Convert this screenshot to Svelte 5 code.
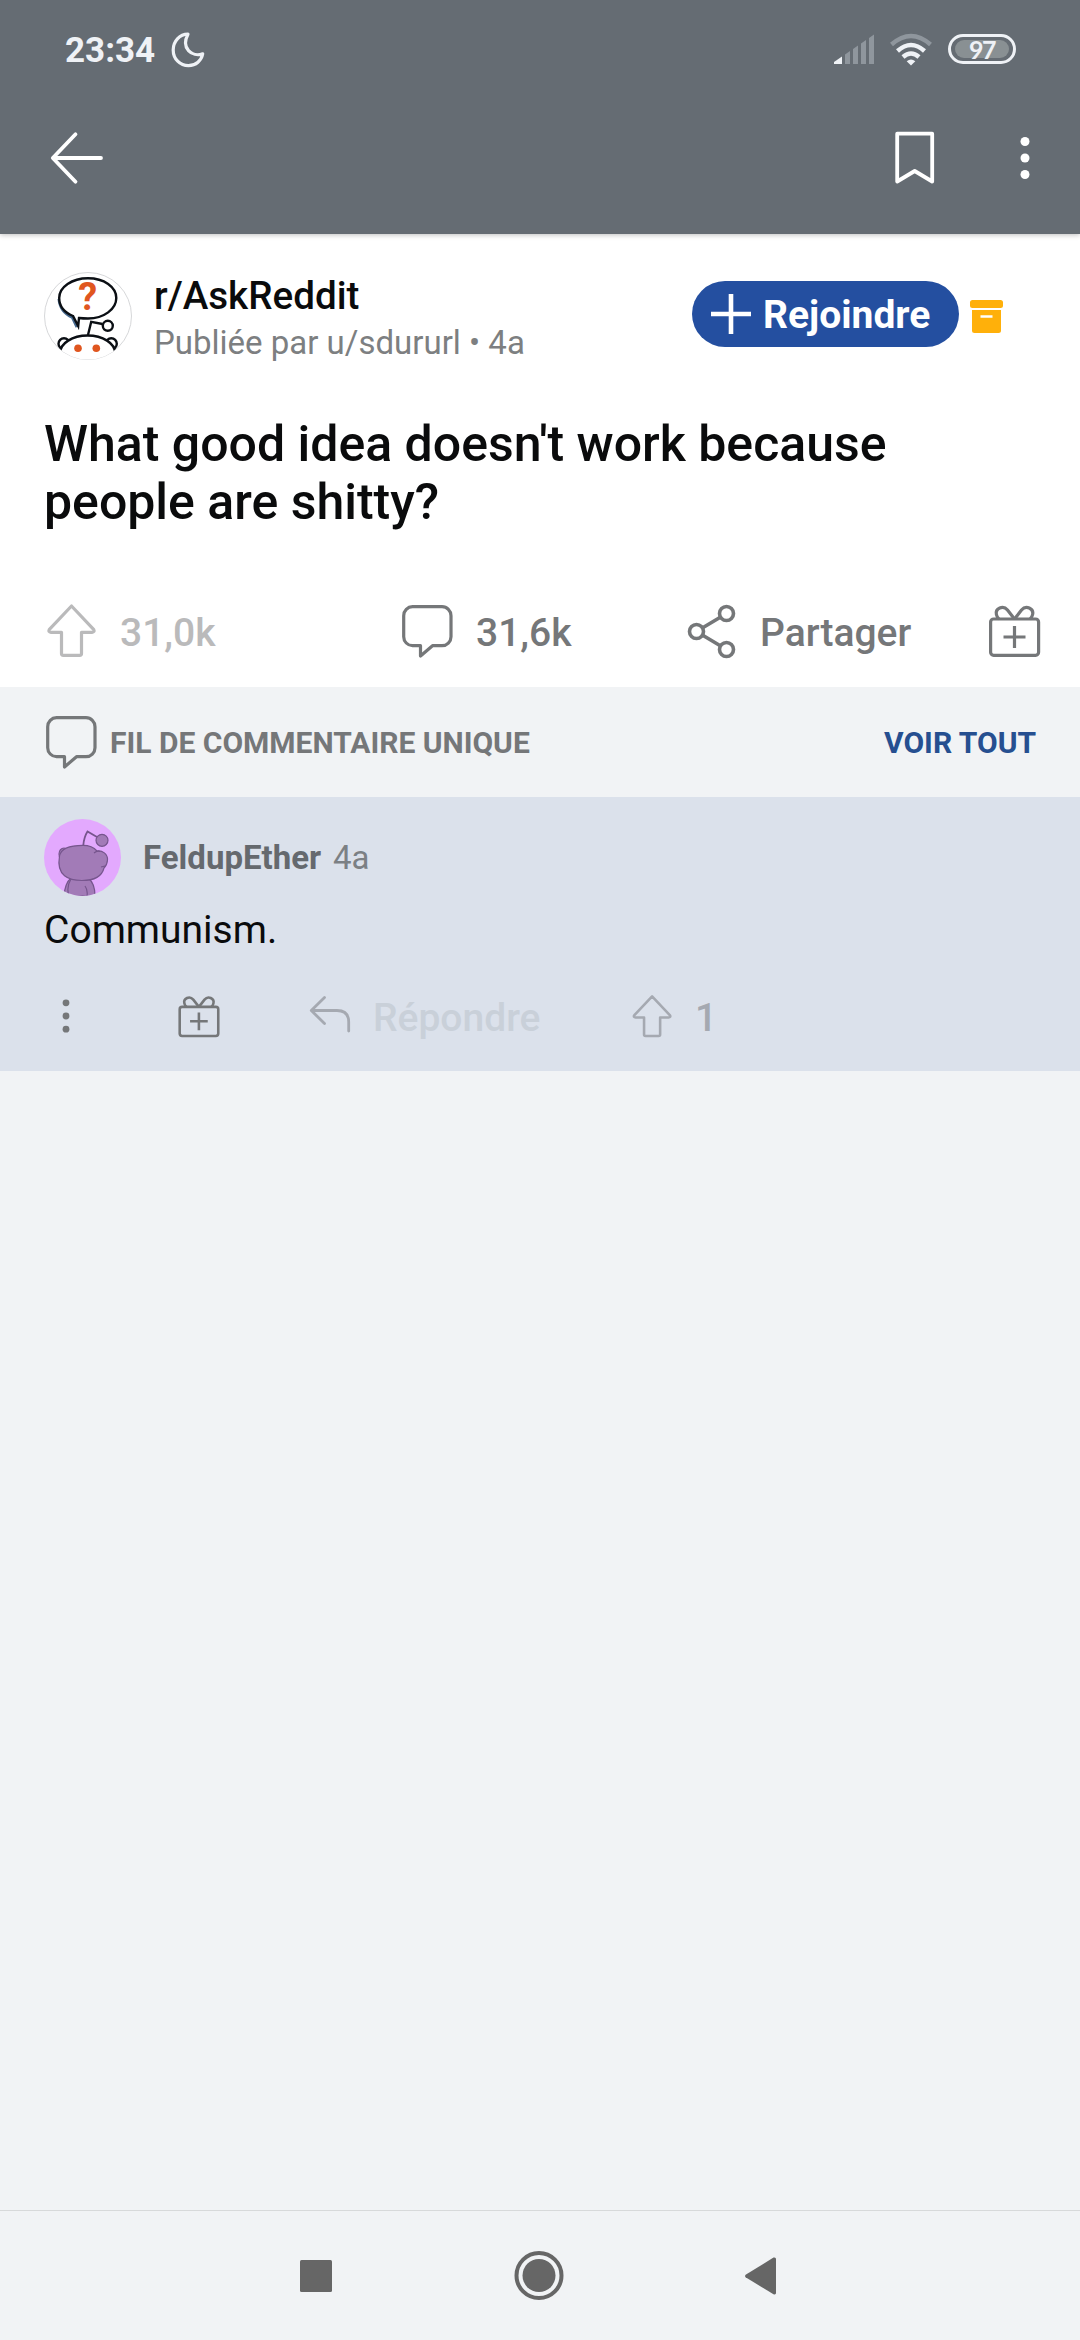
<script>
  let time = '23:34';
  let battery = 97;

  const post = {
    subreddit: 'r/AskReddit',
    byline: 'Publiée par u/sdururl • 4a',
    title: "What good idea doesn't work because people are shitty?",
    score: '31,0k',
    comments: '31,6k'
  };

  const comment = {
    author: 'FeldupEther',
    age: '4a',
    body: 'Communism.',
    score: 1
  };
</script>

{#snippet upvote()}
  <svg class="icon" viewBox="0 0 56 56">
    <path d="M27.5 3 L49.8 26.6 Q51 29 48 29.3 H37.5 V50.5 Q37.5 52.3 35.7 52.3 H19.3 Q17.5 52.3 17.5 50.5 V29.3 H7 Q4 29 5.2 26.6 Z" />
  </svg>
{/snippet}

{#snippet bubble()}
  <svg class="icon" viewBox="0 0 56 56">
    <path d="M12.5 3.7 H42 A9 9 0 0 1 51 12.7 V33.7 A9 9 0 0 1 42 42.7 H32.5 L20.5 53 V42.7 H12.5 A9 9 0 0 1 3.7 33.7 V12.7 A9 9 0 0 1 12.5 3.7 Z" />
  </svg>
{/snippet}

{#snippet gift()}
  <svg class="icon" viewBox="0 0 56 56">
    <rect x="4.6" y="16" width="48" height="36.3" rx="3" />
    <path d="M28.5 16 L21.5 7 C17 1.5 9 5.5 10.4 11.5 Q11 14.5 13 16" />
    <path d="M28.5 16 L35.5 7 C40 1.5 48 5.5 46.6 11.5 Q46 14.5 44 16" />
    <path d="M28.5 23 V45 M17.5 34 H39.5" />
  </svg>
{/snippet}

<div class="page">
  <header>
    <div class="status">
      <span class="time">{time}</span>
      <svg class="moon" width="34" height="36" viewBox="0 0 34 36">
        <path d="M17 2.2 C8.5 2.2 2.2 9.5 2.2 18 C2.2 27 9 33.7 17.5 33.7 C25 33.7 30.5 28.5 31.7 21.8 C21 25.5 9.5 16 17 2.2 Z" />
      </svg>
      <div class="spacer"></div>
      <svg class="signal" width="40" height="30" viewBox="0 0 40 30">
        <path class="on" d="M0 27 L8 21.5 V29 H0 Z" />
        <path d="M11 19.5 L16 16 V29 H11 Z M19 14 L24 10.5 V29 H19 Z M27 8.5 L32 5 V29 H27 Z M35 3 L40 -0.5 V29 H35 Z" />
      </svg>
      <svg class="wifi" width="44" height="32" viewBox="0 0 44 32">
        <path class="dim" d="M2.5 10.5 Q22 -6.5 41.5 10.5" />
        <path d="M8.5 17 Q22 5 35.5 17" />
        <path d="M14 23 Q22 16 30 23" />
        <path class="dot" d="M22 31.5 L17.7 27.3 Q22 23.5 26.3 27.3 Z" />
      </svg>
      <div class="battery"><span>{battery}</span></div>
    </div>
    <div class="appbar">
      <svg width="60" height="60" viewBox="0 0 60 60">
        <path d="M26.5 6.3 L3.8 30 L26.5 53.7 M4.5 30 H52" />
      </svg>
      <div class="spacer"></div>
      <svg class="bookmark" width="44" height="60" viewBox="0 0 44 60">
        <path d="M4.2 5.7 H39.2 V53.5 L21.7 43 L4.2 53.5 Z" />
      </svg>
      <svg class="dots" width="12" height="60" viewBox="0 0 12 60">
        <circle cx="6" cy="13.5" r="4.5" />
        <circle cx="6" cy="30" r="4.5" />
        <circle cx="6" cy="46.5" r="4.5" />
      </svg>
    </div>
  </header>

  <article>
    <div class="community">
      <svg class="logo" width="88" height="88" viewBox="0 0 88 88">
        <defs>
          <clipPath id="rim"><circle cx="44" cy="44" r="43.5" /></clipPath>
        </defs>
        <circle class="rim" cx="44" cy="44" r="43.5" />
        <g clip-path="url(#rim)">
          <path class="shadow" d="M15 27 Q16 40 28.5 45.5 L33 55" />
          <path class="line" d="M29 44 C20.5 40.5 15.2 34 15.2 26 C15.2 15 28 6.2 44 6.2 C60 6.2 72.3 15 72.3 26 C72.3 37 60 46.5 44 46.5 Q39 46.5 35 46 L34.2 54 Z" />
          <text x="43.8" y="38.2">?</text>
          <circle class="line" cx="20" cy="71.7" r="5.5" />
          <circle class="line" cx="67.3" cy="71.7" r="5.5" />
          <ellipse class="line" cx="43.6" cy="81" rx="27.5" ry="17.5" />
          <path class="line" d="M44 63 L47.2 49.8 L58.5 52" />
          <circle class="line" cx="63.8" cy="53.8" r="5" />
          <circle class="eye" cx="34" cy="76.3" r="3.8" />
          <circle class="eye" cx="52.3" cy="76.3" r="3.8" />
        </g>
      </svg>
      <div class="names">
        <div class="subreddit">{post.subreddit}</div>
        <div class="byline">{post.byline}</div>
      </div>
      <button class="join">
        <svg width="40" height="40" viewBox="0 0 40 40"><path d="M20 0 V40 M0 20 H40" /></svg>
        <span>Rejoindre</span>
      </button>
      <svg class="archive" width="33" height="33" viewBox="0 0 33 33">
        <rect width="33" height="8" rx="2.5" />
        <path d="M2 10 H31 V30.5 Q31 33 28.5 33 H4.5 Q2 33 2 30.5 Z" />
        <path class="slot" d="M10.5 16.5 H22.5" />
      </svg>
    </div>

    <h1>{post.title}</h1>

    <div class="actions">
      <div class="action faded">{@render upvote()}<span>{post.score}</span></div>
      <div class="action">{@render bubble()}<span>{post.comments}</span></div>
      <div class="action">
        <svg class="icon share" viewBox="0 0 56 56">
          <path d="M18.7 24.8 L36.3 14.2 M18.7 32.2 L36.3 42.8" />
          <circle cx="42.5" cy="10.5" r="7" />
          <circle cx="12.5" cy="28.5" r="7" />
          <circle cx="42.5" cy="46.5" r="7" />
        </svg>
        <span>Partager</span>
      </div>
      <div class="action">{@render gift()}</div>
    </div>
  </article>

  <div class="thread">
    {@render bubble()}
    <span>FIL DE COMMENTAIRE UNIQUE</span>
    <a href="#all">VOIR TOUT</a>
  </div>

  <section class="comment">
    <div class="author">
      <svg class="snoo" width="77" height="77" viewBox="0 0 77 77">
        <defs>
          <clipPath id="round"><circle cx="38.5" cy="38.5" r="38.5" /></clipPath>
        </defs>
        <g clip-path="url(#round)">
          <rect class="bg" width="77" height="77" />
          <path d="M20 77 Q21 64 27 59 H44 Q51 64 51 77 Z" />
          <path class="thin" d="M27 60 Q22 68 25 77 M41 67 Q44 71 43 77" />
          <ellipse cx="20" cy="35" rx="5" ry="6" />
          <path d="M15.5 37 C17 29 28 26.3 39 26.3 C45 26.3 50 28.5 53 32 C58 31 64 35 63.5 41 C63.3 45 61 48 60 49 C58 57 50 61.5 38 61.5 C25 61.5 12 57 15.5 37 Z" />
          <path class="thin" d="M50 34 Q53 31.5 56 32.5 M57 48 L61 47" />
          <path class="thin antenna" d="M39.3 26.3 Q40 18 43.5 12.5 L53 18" />
          <circle cx="58" cy="21.3" r="6" />
        </g>
      </svg>
      <span class="name">{comment.author}</span>
      <span class="age">{comment.age}</span>
    </div>
    <p>{comment.body}</p>
    <div class="actions small">
      <div class="action">
        <svg class="more" width="44" height="46" viewBox="0 0 44 46">
          <circle cx="22" cy="9.8" r="3.4" />
          <circle cx="22" cy="23" r="3.4" />
          <circle cx="22" cy="36.2" r="3.4" />
        </svg>
      </div>
      <div class="action">{@render gift()}</div>
      <div class="action reply">
        <svg class="icon" viewBox="0 0 48 48">
          <path d="M19.5 5.5 L6.3 18.5 L19.5 31.5 M6.5 18.5 H32 Q43.7 18.5 43.7 30 V39" />
        </svg>
        <span>Répondre</span>
      </div>
      <div class="action faded">{@render upvote()}<span>{comment.score}</span></div>
    </div>
  </section>

  <nav>
    <svg width="32" height="32" viewBox="0 0 32 32"><rect width="32" height="32" rx="1.5" /></svg>
    <svg width="49" height="49" viewBox="0 0 49 49">
      <circle class="ring" cx="25" cy="24.5" r="22.5" />
      <circle cx="25" cy="24.5" r="16.5" />
    </svg>
    <svg width="31" height="38" viewBox="0 0 31 38">
      <path d="M0.6 17.7 L28.5 0.6 Q31 0 31 2 V36 Q31 38 28.5 37.3 L0.6 20.3 Q-0.5 19 0.6 17.7 Z" />
    </svg>
  </nav>
</div>

<style>
  :global(body) {
    margin: 0;
  }
  .page {
    display: flex;
    flex-direction: column;
    width: 1080px;
    height: 2340px;
    background: #f1f3f5;
    font-family: Roboto, "Liberation Sans", sans-serif;
    overflow: hidden;
  }
  svg {
    display: block;
    flex: none;
    overflow: visible;
  }
  .spacer {
    flex: 1;
  }

  header {
    height: 234px;
    background: #656c73;
    box-shadow: 0 1px 5px rgba(0, 0, 0, 0.25);
    position: relative;
  }
  .status {
    display: flex;
    align-items: center;
    height: 100px;
    padding: 0 64px 0 65px;
    color: #eff2f6;
  }
  .time {
    font-size: 35px;
    font-weight: 700;
  }
  .moon {
    margin-left: 16px;
    fill: none;
    stroke: #eff2f6;
    stroke-width: 3.2;
    stroke-linejoin: round;
  }
  .signal {
    fill: #8f969d;
  }
  .signal .on {
    fill: #eff2f6;
  }
  .wifi {
    margin: 0 15px;
    fill: none;
    stroke: #eff2f6;
    stroke-width: 4.5;
  }
  .wifi .dim {
    stroke: #8f969d;
  }
  .wifi .dot {
    fill: #eff2f6;
    stroke: none;
  }
  .battery {
    box-sizing: border-box;
    width: 68px;
    height: 30px;
    margin-top: -2px;
    padding: 3px 4px;
    border: 3px solid #eff2f6;
    border-radius: 15px;
  }
  .battery span {
    display: block;
    height: 18px;
    border-radius: 9px;
    background: #899093;
    font: 700 25px/18px Lato, sans-serif;
    letter-spacing: -1.5px;
    text-align: center;
  }
  .appbar {
    display: flex;
    align-items: center;
    height: 115px;
    padding: 0 49px;
  }
  .appbar svg {
    fill: none;
    stroke: #fff;
    stroke-width: 3.8;
    stroke-linecap: round;
    stroke-linejoin: round;
  }
  .appbar .dots {
    margin-left: 82px;
    fill: #fff;
    stroke: none;
  }

  article {
    height: 453px;
    background: #fff;
  }
  .community {
    display: flex;
    align-items: flex-start;
    padding: 38px 77px 0 44px;
  }
  .logo .rim {
    fill: #fff;
    stroke: #c4c6c8;
    stroke-width: 0.7;
  }
  .logo .line {
    fill: #fff;
    stroke: #0b0f14;
    stroke-width: 2.4;
  }
  .logo .shadow {
    fill: none;
    stroke: #46698f;
    stroke-width: 3;
  }
  .logo text {
    font: 700 38px Roboto, sans-serif;
    text-anchor: middle;
    fill: #e0561f;
  }
  .logo .eye {
    fill: #e0561f;
  }
  .names {
    flex: 1;
    padding: 1px 0 0 22px;
  }
  .subreddit {
    font-size: 38.6px;
    font-weight: 500;
    line-height: 46px;
    color: #0a0b0c;
  }
  .byline {
    margin-top: 5px;
    font-size: 33px;
    line-height: 38px;
    color: #7d7f81;
  }
  .join {
    display: flex;
    align-items: center;
    gap: 12px;
    box-sizing: border-box;
    width: 267px;
    height: 66px;
    margin: 9px 11px 0 0;
    padding: 0 0 0 19px;
    border: 0;
    border-radius: 33px;
    background: #244fa0;
    color: #fff;
    font: 700 39px/46px Roboto, sans-serif;
  }
  .join span {
    padding-top: 2px;
  }
  .join svg {
    stroke: #fff;
    stroke-width: 4.6;
  }
  .archive {
    margin-top: 28px;
    fill: #ffb00a;
  }
  .archive .slot {
    stroke: #fff;
    stroke-width: 2.5;
  }
  h1 {
    margin: 53px 44px 0;
    font-size: 50px;
    font-weight: 500;
    line-height: 58px;
    color: #0a0b0c;
  }
  .actions {
    display: grid;
    grid-template-columns: 356px 284px 302px 56px;
    align-items: center;
    height: 112px;
    margin: 44px 0 0 44px;
    color: #757779;
    font-size: 39px;
    font-weight: 500;
  }
  .action {
    display: flex;
    align-items: center;
    gap: 20px;
  }
  .action span {
    padding-top: 4px;
  }
  .icon {
    width: 56px;
    height: 56px;
    fill: none;
    stroke: currentColor;
    stroke-width: 3.2;
    stroke-linejoin: round;
  }
  .share {
    stroke-width: 3.6;
  }
  .faded {
    color: #bababb;
  }

  .thread {
    display: flex;
    align-items: center;
    height: 110px;
    padding: 0 44px;
    color: #757779;
    font-size: 30px;
    font-weight: 700;
  }
  .thread span {
    flex: 1;
    margin-left: 10px;
  }
  .thread a {
    color: #264f90;
    text-decoration: none;
  }

  .comment {
    height: 274px;
    box-sizing: border-box;
    padding: 22px 44px 0;
    background: #dbe1eb;
  }
  .author {
    display: flex;
    align-items: center;
    font-size: 33px;
    color: #7c8084;
  }
  .snoo {
    fill: #a27bb7;
    stroke: #76558d;
    stroke-width: 1.2;
  }
  .snoo .bg {
    fill: #e3a9fe;
    stroke: none;
  }
  .snoo .thin {
    fill: none;
  }
  .snoo .antenna {
    stroke-width: 1.8;
  }
  .name {
    margin: 0 12px 0 22px;
    font-weight: 700;
    color: #65696e;
  }
  .comment p {
    margin: 11px 0 0;
    font-size: 39px;
    line-height: 46px;
    color: #0a0b0c;
  }
  .small {
    grid-template-columns: 131.5px 129.5px 325px 1fr;
    height: 110px;
    margin: 8px 0 0;
  }
  .small .action span {
    padding-top: 3px;
  }
  .small .icon {
    width: 45px;
    height: 45px;
  }
  .small .faded {
    color: #a5a9b1;
  }
  .small .reply {
    color: #a5a9b1;
  }
  .small .reply .icon {
    width: 48px;
    height: 48px;
    stroke-width: 2.8;
    stroke-linecap: round;
  }
  .small .reply span {
    color: #c9d0d9;
  }
  .more {
    fill: #757779;
  }

  nav {
    display: flex;
    align-items: center;
    justify-content: space-between;
    box-sizing: border-box;
    height: 130px;
    margin-top: auto;
    padding: 0 304px 0 300px;
    border-top: 1px solid #d7d9da;
    fill: #666;
  }
  .ring {
    fill: none;
    stroke: #666;
    stroke-width: 4;
  }
</style>
